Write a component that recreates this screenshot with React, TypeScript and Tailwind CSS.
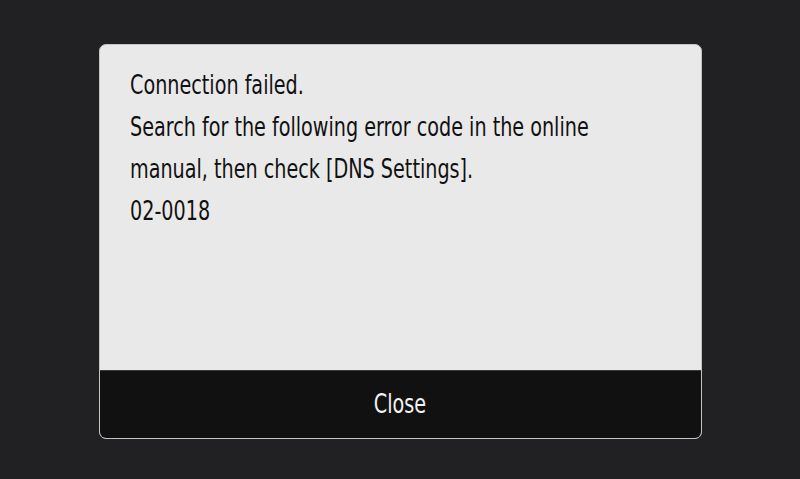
export default function App() {
  const font = { fontFamily: '"DejaVu Sans Condensed", "Liberation Sans Narrow", "Roboto", sans-serif' }
  return (
    <div className="w-[800px] h-[479px] bg-[#212123] flex justify-center pt-[44px]" style={font}>
      <div className="w-[603px] h-[395px] rounded-[7px] border border-[#c4c4c4] bg-[#e9e9e9] overflow-hidden flex flex-col">
        <div className="flex-1 pl-[30px] pt-[19px]">
          <div className="text-[26px] leading-[42px] text-[#111] origin-left scale-x-[0.82] whitespace-nowrap">
            <p>Connection failed.</p>
            <p>Search for the following error code in the online</p>
            <p>manual, then check [DNS Settings].</p>
            <p>02-0018</p>
          </div>
        </div>
        <div className="h-[68px] bg-[#111111] border-t border-[#3a3a3a] flex items-center justify-center">
          <span className="text-[26px] text-[#f2f2f2] scale-x-[0.82]">Close</span>
        </div>
      </div>
    </div>
  )
}
